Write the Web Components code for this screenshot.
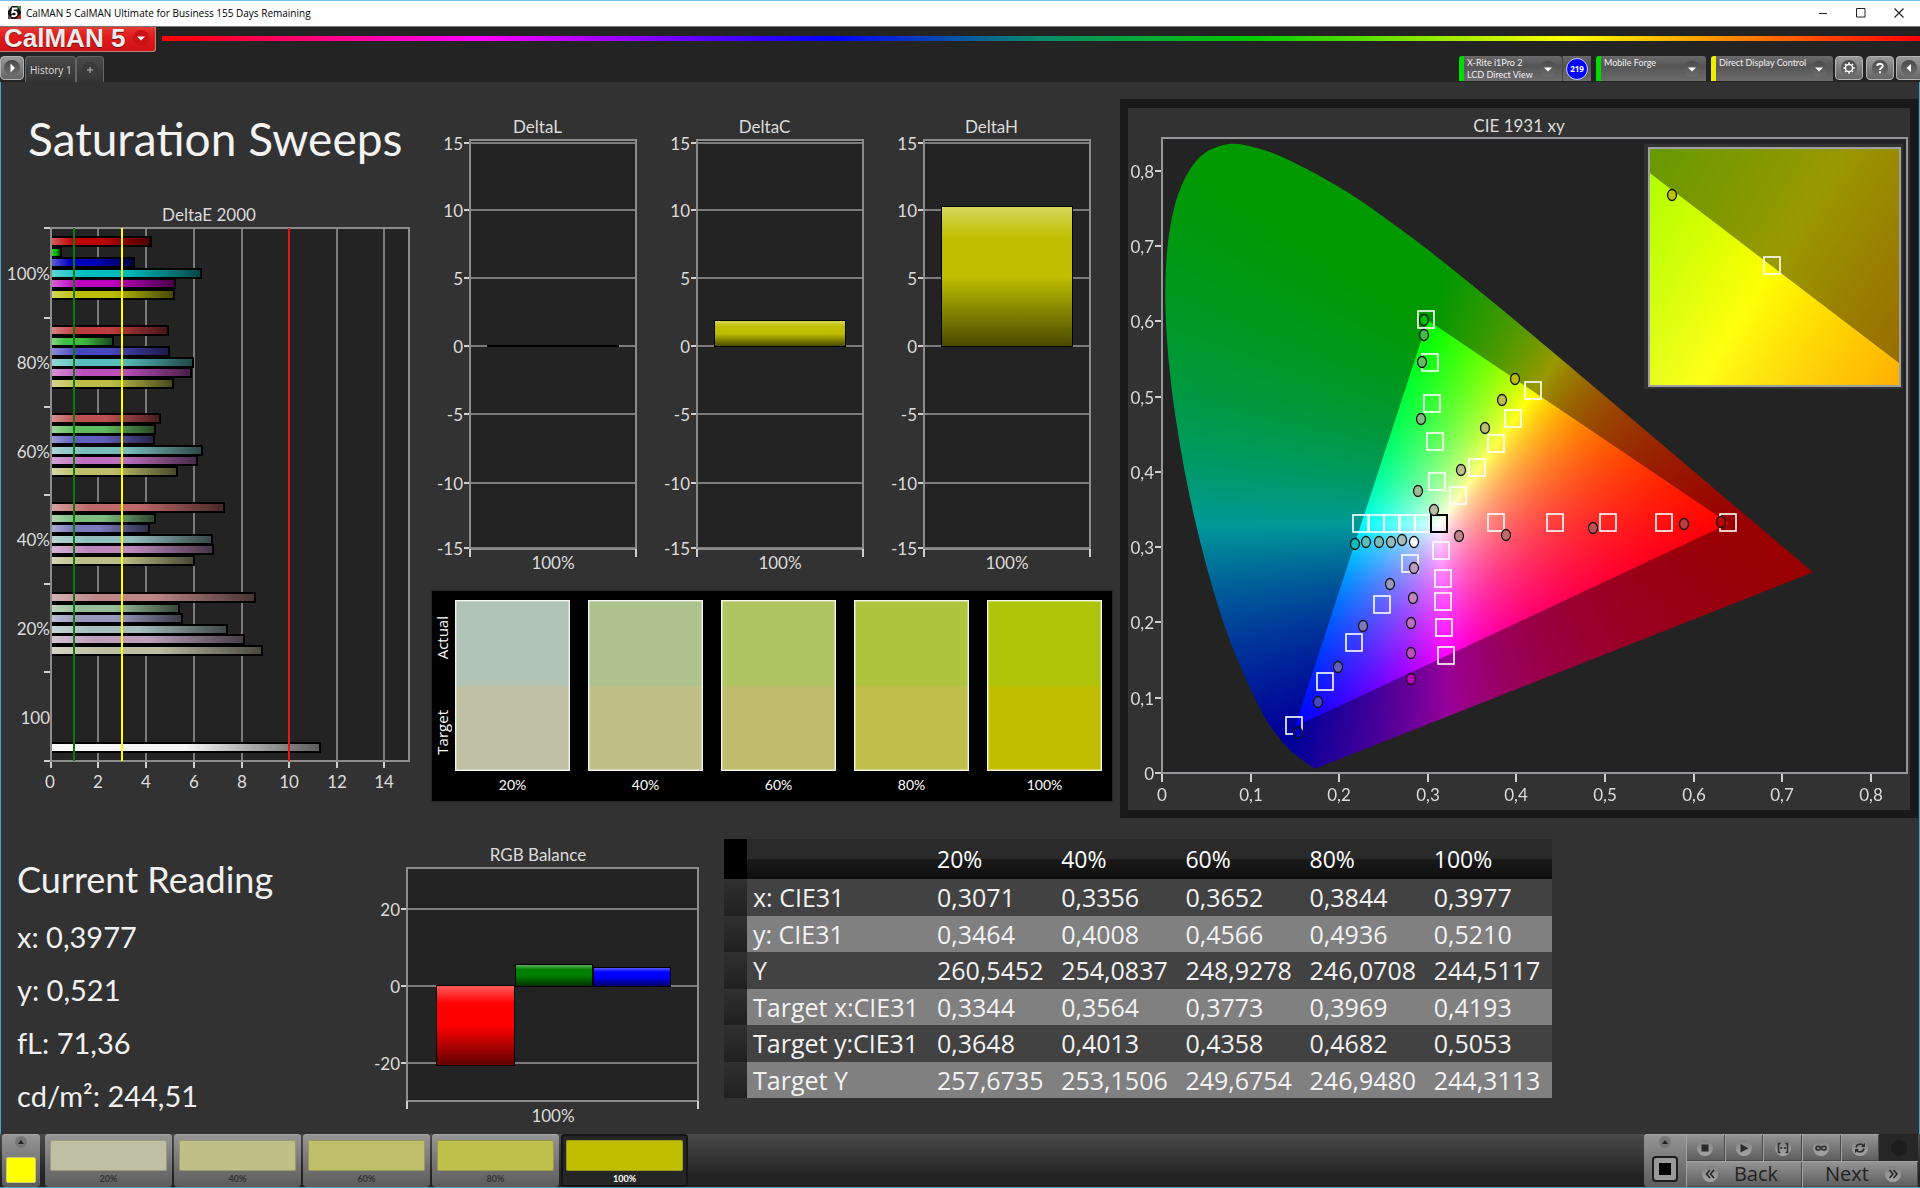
<!DOCTYPE html>
<html lang="en">
<head>
<meta charset="utf-8">
<title>CalMAN 5</title>
<style>
html, body { margin: 0; background: #323232; }
body { font-family: Lato, "Open Sans", sans-serif; color: #dcdcdc; }
</style>
</head>
<body>
<calman-app></calman-app>
<script>
const define = (name, css, html, init) => {
  customElements.define(name, class extends HTMLElement {
    connectedCallback() {
      if (this.shadowRoot) return;
      const root = this.attachShadow({ mode: 'open' });
      root.innerHTML = `<style>*{box-sizing:border-box}${css}</style>` + (typeof html === 'function' ? html(this) : html);
      if (init) init(this, root);
    }
  });
};

const line = (x1, y1, x2, y2, c = '#7c7c7c', w = 2) =>
  `<path d="M${x1} ${y1}L${x2} ${y2}" stroke="${c}" stroke-width="${w}" fill="none" shape-rendering="crispEdges"/>`;
const tick = (x1, y1, x2, y2) => line(x1, y1, x2, y2, '#cfcfcf', 2);
const label = (x, y, t, anchor = 'end') => `<text x="${x}" y="${y}" text-anchor="${anchor}">${t}</text>`;
const mix = (c, d, k) => c.map((v, i) => Math.round(v + (d[i] - v) * k));
const rgb = c => `rgb(${c.join(',')})`;
const shade = (id, c, vertical) => `<linearGradient id="${id}" x2="${vertical ? 0 : 1}" y2="${vertical ? 1 : 0}">
  <stop offset="0" stop-color="${rgb(mix(c, [255, 255, 255], .36))}"/><stop offset=".22" stop-color="${rgb(c)}"/>
  <stop offset=".5" stop-color="${rgb(c)}"/><stop offset="1" stop-color="${rgb(mix(c, [0, 0, 0], .62))}"/></linearGradient>`;

/* Saturation levels run 100, 80, 60, 40, 20 %; LOW holds the value of the reduced channels at each */
const HUES = { red: [1, 0, 0], green: [0, 1, 0], blue: [0, 0, 1], cyan: [0, 1, 1], magenta: [1, 0, 1], yellow: [1, 1, 0] };
const LOW = { red: [0, 60, 82, 105, 134], green: [0, 64, 98, 126, 150], blue: [0, 70, 96, 122, 152],
  cyan: [0, 88, 120, 146, 166], magenta: [0, 80, 110, 136, 158], yellow: [0, 75, 107, 135, 163] };
const tint = (hue, i) => HUES[hue].map(m => m ? 189 : LOW[hue][i]);

const CHART_CSS = `:host{display:block;color:#dcdcdc}
  h2{margin:0;font:400 17px/18px Lato,sans-serif;text-align:center}
  svg{display:block;width:100%;height:auto}
  text{font:400 17px Lato,sans-serif;fill:#dcdcdc}`;

/* Horizontal DeltaE bars */
define('delta-e-chart', CHART_CSS + 'h2{padding-right:13px}', () => {
  const ends = [
    [152, 62, 135, 202, 176, 175], [169, 114, 170, 194, 192, 174], [161, 156, 155, 203, 198, 178],
    [225, 156, 150, 213, 214, 195], [256, 180, 183, 228, 245, 263]];
  const tops = [12, 101, 189, 278, 368];
  let defs = '', bars = '', grid = '', marks = '';
  const bar = (id, c, y, end) => {
    defs += shade(id, c);
    bars += `<rect x="51" y="${y}" width="${end - 51}" height="11" fill="#000"/><rect x="52" y="${y + 2}" width="${end - 54}" height="7" fill="url(#${id})"/>`;
  };
  ends.forEach((row, g) => Object.keys(HUES).forEach((h, i) =>
    bar(`b${g}${i}`, tint(h, g), tops[g] + Math.round(i * 10.5), row[i])));
  bar('white', [245, 245, 245], 518, 321);
  [98, 146, 194, 242, 289, 337, 384].forEach((x, i) => {
    grid += line(x, 4, x, 537) + tick(x, 537, x, 544);
    marks += label(x, 564, 2 * (i + 1), 'middle');
  });
  [4, 94, 183, 271, 360, 448, 537].forEach(y => grid += tick(44, y, 51, y));
  ['100%', '80%', '60%', '40%', '20%', '100'].forEach((t, i) => marks += label(50, 56 + Math.round(i * 88.8), t));
  return `<h2>DeltaE 2000</h2><svg viewBox="0 0 431 580" role="img" aria-label="DeltaE 2000"><defs>${defs}</defs>
    <rect x="51" y="4" width="358" height="533" fill="#232323"/>${grid}${tick(51, 537, 51, 544)}
    ${bars}<path d="M51 4H409V537H51Z" fill="none" stroke="#8c8c8c" stroke-width="2" shape-rendering="crispEdges"/>
    ${line(74, 4, 74, 537, '#0a780a')}${line(122, 4, 122, 537, '#ffff00')}${line(289, 4, 289, 537, '#e01818')}
    ${label(50, 564, 0, 'middle')}${marks}</svg>`;
});

/* Vertical delta bar chart; the title is slotted, the bar value is an attribute */
define('delta-chart', CHART_CSS + 'h2{padding-right:24px}', el => {
  const zero = 210, v = +el.getAttribute('value'), top = Math.round(zero - v * 13.55);
  let g = '';
  [[15, 7], [10, 74], [5, 142], [0, 210], [-5, 278], [-10, 347], [-15, 412]].forEach(([t, y]) =>
    g += line(34, y, 200, y) + tick(28, y, 34, y) + label(27, y + 7, t));
  const bar = v > .1
    ? `<rect x="51" y="${top}" width="132" height="${zero - top + 1}" fill="#000"/><rect x="52" y="${top + 1}" width="130" height="${zero - top - 1}" fill="url(#y)"/>`
    : `<rect x="51" y="209" width="132" height="2" fill="#000"/>`;
  return `<h2><slot></slot></h2><svg viewBox="0 0 227 439" role="img"><defs>${shade('y', [191, 191, 0], 1)}</defs>
    <rect x="34" y="4" width="166" height="409" fill="#232323"/>${g}
    <path d="M34 4H200V413H34Z" fill="none" stroke="#8c8c8c" stroke-width="2" shape-rendering="crispEdges"/>
    ${tick(34, 413, 34, 421)}${tick(200, 413, 200, 421)}${bar}${label(117, 433, '100%', 'middle')}</svg>`;
});

/* RGB balance */
define('rgb-balance', CHART_CSS + 'h2{padding-right:7px}', () => {
  let g = '';
  [[20, 45], [0, 122], [-20, 199]].forEach(([t, y]) => g += line(42, y, 333, y) + tick(36, y, 42, y) + label(35, y + 7, t));
  const bar = (id, x, y, w, h) => `<rect x="${x}" y="${y}" width="${w}" height="${h}" fill="#000"/><rect x="${x + 1}" y="${y + 1}" width="${w - 2}" height="${h - 2}" fill="url(#${id})"/>`;
  return `<h2>RGB Balance</h2><svg viewBox="0 0 353 260" role="img" aria-label="RGB Balance">
    <defs>${shade('r', [255, 0, 0], 1)}${shade('g', [0, 128, 0], 1)}${shade('b', [0, 0, 255], 1)}</defs>
    <rect x="42" y="4" width="291" height="233" fill="#232323"/>${g}
    <path d="M42 4H333V237H42Z" fill="none" stroke="#8c8c8c" stroke-width="2" shape-rendering="crispEdges"/>
    ${tick(42, 237, 42, 245)}${tick(333, 237, 333, 245)}
    ${bar('r', 71, 121, 79, 81)}${bar('g', 150, 100, 78, 23)}${bar('b', 228, 103, 78, 20)}${label(188, 258, '100%', 'middle')}</svg>`;
});

/* Actual / target swatches */
define('color-swatches', `:host{display:flex;background:#000;padding:9px 10px 2px 0;outline:1px solid #282828}
  .side{width:23px;height:171px;padding:16px 0;display:flex;flex-direction:column;justify-content:space-between;font:400 15px/20px "Open Sans",sans-serif;color:#fff}
  .side span{writing-mode:vertical-rl;transform:rotate(180deg)}
  ul{flex:1;display:flex;gap:18px;margin:0;padding:0;list-style:none}
  li{flex:1;font-size:14px;line-height:28px;color:#fff;text-align:center}
  i{display:block;height:171px;border:1px solid #f4f4ee;box-shadow:inset 0 0 0 1px rgba(255,255,255,.35)}`,
  () => {
    const s = [['20%', '#b0c3b6', '#bfbfa3'], ['40%', '#aec28e', '#c0bf87'], ['60%', '#afc463', '#bfbd6b'], ['80%', '#aec43e', '#bfbe4b'], ['100%', '#aec408', '#bfbf00']];
    return `<div class="side"><span>Actual</span><span>Target</span></div><ul>${s.map(([t, a, b]) => `<li><i style="background:linear-gradient(${a} 50%,${b} 50%)"></i>${t}</li>`).join('')}</ul>`;
  });

/* CIE 1931 chromaticity diagram */
const LOCUS = [[.1741, .005], [.1714, .0051], [.1689, .0069], [.1644, .0109], [.1566, .0177], [.144, .0297], [.1241, .0578], [.1096, .0868], [.0913, .1327],
  [.0687, .2007], [.0454, .295], [.0235, .4127], [.0082, .5384], [.0039, .6548], [.0139, .7502], [.0389, .812], [.0743, .8338], [.1142, .8262], [.1547, .8059],
  [.1929, .7816], [.2296, .7543], [.3016, .6923], [.3731, .6245], [.4441, .5547], [.5125, .4866], [.5752, .4242], [.627, .3725], [.6658, .334], [.6915, .3083], [.7347, .2653]];
const GAMUT = [[.64, .33], [.3, .6], [.15, .06]];
const xyColor = (x, y) => {
  y = Math.max(y, .0001);
  const X = x / y, Z = (1 - x - y) / y;
  const c = [3.2406 * X - 1.5372 - .4986 * Z, -.9689 * X + 1.8758 + .0415 * Z, .0557 * X - .204 + 1.057 * Z].map(v => Math.max(v, 0));
  const m = Math.max(...c);
  return c.map(v => 255 * v / m);
};
function paint(ctx, box, toPx, toXY, locus) {
  const [bx, by, bw, bh] = box, layer = k => {
    const cv = document.createElement('canvas'); cv.width = bw; cv.height = bh;
    const c = cv.getContext('2d'), im = c.createImageData(bw, bh);
    for (let j = 0, p = 0; j < bh; j++) for (let i = 0; i < bw; i++) {
      const v = xyColor(...toXY(bx + i, by + j));
      im.data[p++] = v[0] * k; im.data[p++] = v[1] * k; im.data[p++] = v[2] * k; im.data[p++] = 255;
    }
    c.putImageData(im, 0, 0);
    return cv;
  };
  ctx.save();
  ctx.beginPath(); ctx.rect(bx, by, bw, bh); ctx.clip();
  if (locus) {
    const P = LOCUS.map(q => toPx(...q)), at = i => P[Math.max(0, Math.min(P.length - 1, i))];
    ctx.beginPath(); ctx.moveTo(...P[0]);
    for (let i = 0; i < P.length - 1; i++) {
      const [a, b, c, d] = [at(i - 1), at(i), at(i + 1), at(i + 2)];
      ctx.bezierCurveTo(b[0] + (c[0] - a[0]) / 6, b[1] + (c[1] - a[1]) / 6, c[0] - (d[0] - b[0]) / 6, c[1] - (d[1] - b[1]) / 6, c[0], c[1]);
    }
    ctx.closePath(); ctx.clip();
  }
  ctx.drawImage(layer(.6), bx, by);
  ctx.beginPath(); GAMUT.forEach((q, i) => ctx[i ? 'lineTo' : 'moveTo'](...toPx(...q))); ctx.closePath(); ctx.clip();
  ctx.drawImage(layer(1), bx, by);
  ctx.restore();
}
define('cie-diagram', CHART_CSS + `:host{background:#323232;border:8px solid #191919;border-top-width:9px;padding-top:9px}
  h2{padding:0}
  .plot{display:grid}.plot>*{grid-area:1/1;width:100%;height:auto;display:block}`, () => {
  let g = '';
  [0, .1, .2, .3, .4, .5, .6, .7, .8].forEach((v, i) => {
    const t = i ? '0,' + i : '0', x = Math.round(34 + 886 * v), y = Math.round(638 - 753 * v);
    g += tick(x, 638, x, 647) + label(x, 666, t, 'middle') + tick(27, y, 33, y) + label(26, y + 7, t);
  });
  const sq = (x, y, c = '#fff') => `<rect x="${x - 1128 - 8}" y="${y - 135 - 9}" width="16" height="17" fill="none" stroke="${c}" stroke-width="${c === '#fff' ? 1.6 : 2}"/>`;
  const targets = [[1361, 524], [1376, 524], [1392, 524], [1407, 524], [1423, 524], [1496, 523], [1555, 523], [1608, 523], [1664, 523], [1728, 523],
    [1437, 482], [1435, 442], [1432, 404], [1430, 363], [1426, 320], [1458, 496], [1477, 468], [1496, 444], [1513, 419], [1533, 391],
    [1410, 564], [1382, 605], [1354, 643], [1325, 682], [1294, 726], [1441, 551], [1443, 579], [1443, 602], [1444, 628], [1446, 656], [1772, 266]];
  const actual = {
    cyan: [[1355, 544], [1366, 542], [1379, 542], [1391, 542], [1402, 540]],
    red: [[1721, 522], [1684, 524], [1593, 528], [1506, 535], [1459, 536]],
    green: [[1424, 320], [1424, 335], [1422, 362], [1421, 419], [1418, 491]],
    yellow: [[1515, 379], [1502, 400], [1485, 428], [1461, 470], [1434, 510]],
    blue: [[1298, 733], [1318, 702], [1338, 667], [1363, 626], [1390, 584]],
    magenta: [[1411, 679], [1411, 653], [1411, 623], [1413, 598], [1414, 568]]
  };
  const dot = (x, y, c) => `<ellipse cx="${x - 1128}" cy="${y - 135}" rx="4.500" ry="5.500" fill="${c}" stroke="#141414" stroke-width="1.300"/>`;
  let m = targets.map(t => sq(...t)).join('') + sq(1439, 524, '#000');
  for (const h in actual) actual[h].forEach(([x, y], i) => m += dot(x, y, rgb(tint(h, i))));
  m += dot(1414, 542, '#fff') + dot(1672, 195, '#bfbf00');
  return `<h2>CIE 1931 xy</h2><div class="plot"><canvas width="782" height="675"></canvas>
    <svg viewBox="0 0 782 675" role="img" aria-label="CIE 1931 xy">${g}
    <path d="M34 3V638H779V3Z" fill="none" stroke="#96969a" stroke-width="2" shape-rendering="crispEdges"/>
    <path d="M518 11V252H773V11Z" fill="none" stroke="#323232" stroke-width="4"/>
    <path d="M521 13V251H772V13Z" fill="none" stroke="#a0a0a0" stroke-width="2" shape-rendering="crispEdges"/>${m}</svg></div>`;
}, (el, root) => {
  const ctx = root.querySelector('canvas').getContext('2d');
  ctx.fillStyle = '#232323'; ctx.fillRect(34, 3, 745, 635);
  paint(ctx, [34, 3, 745, 635], (x, y) => [34 + 886 * x, 637 - 753 * y], (px, py) => [(px - 34) / 886, (637 - py) / 753], true);
  paint(ctx, [522, 14, 249, 236], (x, y) => [644 + 4644 * (x - .4193), 131 - 4459 * (y - .5053)],
    (px, py) => [.4193 + (px - 644) / 4644, .5053 - (py - 131) / 4459], false);
});

/* Readings */
define('current-reading', `:host{display:block;color:#f0f0f0}
  h2{margin:0 0 10px;font:400 36px/42px Lato,sans-serif}p{margin:0;font-size:29px;line-height:53px}`,
  `<h2>Current Reading</h2><p>x: 0,3977</p><p>y: 0,521</p><p>fL: 71,36</p><p>cd/m²: 244,51</p>`);

define('reading-table', `:host{display:block}
  table{border-collapse:collapse;table-layout:fixed;width:100%;height:259px;color:#f2f2f2;font:400 25px/30px "Open Sans",sans-serif}
  th,td{font-weight:400;text-align:left;padding:0 0 0 6px;white-space:nowrap}
  thead tr{height:40px;background:linear-gradient(#2a2a2a 0 49%,#1a1a1a 51%,#0e0e0e)}
  thead th{font-size:23px;color:#fff}
  .grip{width:23px;padding:0}
  thead .grip{background:#000}
  tbody .grip{background:linear-gradient(#303030,#202020)}
  .name{width:184px}
  tbody tr{background:#424242}tbody tr:nth-child(even){background:#808080}`, () => {
  const rows = [['x: CIE31', '0,3071', '0,3356', '0,3652', '0,3844', '0,3977'], ['y: CIE31', '0,3464', '0,4008', '0,4566', '0,4936', '0,5210'],
    ['Y', '260,5452', '254,0837', '248,9278', '246,0708', '244,5117'], ['Target x:CIE31', '0,3344', '0,3564', '0,3773', '0,3969', '0,4193'],
    ['Target y:CIE31', '0,3648', '0,4013', '0,4358', '0,4682', '0,5053'], ['Target Y', '257,6735', '253,1506', '249,6754', '246,9480', '244,3113']];
  return `<table><thead><tr><td class="grip"></td><td class="name"></td>${['20%', '40%', '60%', '80%', '100%'].map(t => `<th scope="col">${t}</th>`).join('')}</tr></thead>
    <tbody>${rows.map(([n, ...v]) => `<tr><td class="grip"></td><th scope="row">${n}</th>${v.map(t => `<td>${t}</td>`).join('')}</tr>`).join('')}</tbody></table>`;
});

/* Window frame */
define('window-bar', `:host{display:flex;align-items:flex-start;height:26px;background:#fff;border-top:1px solid #76bdea;padding:0 2px 0 8px;color:#000;font:400 10px/24px "Open Sans",sans-serif}
  svg{display:block}.app{margin:5px 5px 0 0}span{flex:1}
  button{width:38px;height:24px;border:0;background:none;padding:0;display:grid;place-items:center}`,
  `<svg class="app" width="13" height="13" viewBox="0 0 13 13"><rect width="13" height="13" fill="#111"/><path d="M0 0H4L0 5Z" fill="#cfd8c0"/><path d="M9 0H13V6Z" fill="#3c8a3c"/><path d="M13 7V13H8Z" fill="#b8231c"/><path d="M0 8V13H4Z" fill="#7a4a5a"/><path d="M9.500 2.500H5L4.300 6.300C6 5.300 8.800 5.800 8.600 8C8.400 10.400 5.500 10.700 3.500 9.700" fill="none" stroke="#fff" stroke-width="1.900"/></svg>
  <span>CalMAN 5 CalMAN Ultimate for Business 155 Days Remaining</span>
  <button aria-label="Minimize"><svg width="10" height="10"><path d="M1 5.500H9" stroke="#222"/></svg></button>
  <button aria-label="Maximize"><svg width="10" height="10"><path d="M.5.500H9V9H.5Z" fill="none" stroke="#222"/></svg></button>
  <button aria-label="Close"><svg width="10" height="10"><path d="M.5.500L9.500 9.500M9.500.500L.5 9.500" stroke="#222" stroke-width="1.200"/></svg></button>`);

/* Round recessed glyph holder */
define('round-glyph', `:host{display:grid;place-items:center;width:var(--d,16px);height:var(--d,16px);border-radius:50%;background:var(--bg,linear-gradient(#4a4a4a,#6e6e6e))}
  svg{display:block;overflow:visible}`, el => {
  const k = el.getAttribute('kind'), f = el.getAttribute('ink') || '#fff', s = `fill="none" stroke="${f}" stroke-width="1.500"`;
  const shapes = {
    down: `<path d="M2 4.500H10L6 8.500Z" fill="${f}"/>`, up: `<path d="M3 8H9L6 4Z" fill="${f}"/>`,
    right: `<path d="M4.500 1.500V10.500L9 6Z" fill="${f}"/>`, left: `<path d="M8 2V10L3.500 6Z" fill="${f}"/>`,
    plus: `<path d="M6 3V9M3 6H9" ${s}/>`, stop: `<path d="M2.500 2.500H9.500V9.500H2.500Z" fill="${f}"/>`,
    play: `<path d="M2.500 2V10.500L10.500 6.200Z" fill="${f}"/>`,
    step: `<path d="M3.500 1.500H1.500V10.500H3.500M8.500 1.500H10.500V10.500H8.500M3 6H5.200M6.800 6H9" ${s}/>`,
    loop: `<path d="M6 6C4.500 3.500 1 3.500 1 6S4.500 8.500 6 6S11 3.500 11 6S7.500 8.500 6 6Z" ${s}/>`,
    sync: `<path d="M2 5.500A4.200 4.200 0 0 1 9.500 3.800M10 6.500A4.200 4.200 0 0 1 2.500 8.200" ${s}/><path d="M11 1V5H7ZM1 11V7H5Z" fill="${f}"/>`,
    back: `<path d="M6 2L2.500 6L6 10M10 2L6.500 6L10 10" ${s}/>`, next: `<path d="M2.500 2L6 6L2.500 10M6.500 2L10 6L6.500 10" ${s}/>`,
    gear: `<circle cx="6" cy="6" r="3.600" ${s}/><path d="M6 .300V2M6 10V11.700M.3 6H2M10 6H11.700M2 2L3.200 3.200M8.800 8.800L10 10M10 2L8.800 3.200M3.200 8.800L2 10" ${s}/>`,
    help: `<path d="M3.300 4C3.300 1 8.700 1 8.700 3.900C8.700 5.800 6 5.700 6 8" fill="none" stroke="${f}" stroke-width="2"/><path d="M5 9.300H7V11.300H5Z" fill="${f}"/>`
  };
  return `<svg width="12" height="12" viewBox="0 0 12 12">${shapes[k] || ''}</svg>`;
});

define('device-menu', `:host{display:flex;height:25px}
  button{flex:1;display:flex;justify-content:space-between;align-items:center;border:0;border-left:5px solid var(--state);border-radius:3px 3px 0 0;background:linear-gradient(#6a6a6a,#555 40%,#6c6c6c);padding:0 6px 0 3px;color:#f0f0f0;font:400 9px/12px Lato,sans-serif;text-align:left}
  span{align-self:flex-start;white-space:pre;padding-top:1px}`,
  el => `<button><span>${el.getAttribute('label').replace('|', '\n')}</span><round-glyph kind="down"></round-glyph></button><slot></slot>`);

define('app-header', `:host{display:block;background:#232323;height:56px;border-top:1px solid #777}
  .top{display:flex;align-items:flex-start;height:29px}
  .logo{width:156px;height:25px;border:0;border-radius:0 0 3px 0;background:linear-gradient(#e63a36,#e01b1b 40%,#cf1212);box-shadow:inset -1px -1px #b98080;display:flex;align-items:center;padding:0 7px 3px 4px;justify-content:space-between;color:#ececec;font:700 26px/22px "Liberation Sans",sans-serif;white-space:nowrap;text-shadow:0 1px 1px #701010}
  .rainbow{flex:1;height:5px;margin:9px 0 0 6px;background:linear-gradient(90deg,#f00,#f0f 18%,#00f 38%,#0a8a6a 50%,#0c0 62%,#ff0 80%,#f00)}
  .row{display:flex;align-items:flex-start;height:26px}
  .box{height:24px;width:28px;border:1px solid #b4b4b4;border-radius:4px;background:linear-gradient(#9a9a9a,#666);padding:0;display:grid;place-items:center}
  .tab{height:26px;border:1px solid #666;border-width:1px 1px 0;border-radius:4px 4px 0 0;background:linear-gradient(#4a4a4a,#333);color:#dedede;font:400 10px/14px "Open Sans",sans-serif;padding:0 4px;display:grid;place-items:center;white-space:nowrap}
  .space{flex:1}
  device-menu{margin-right:5px}
  .badge{display:grid;place-items:center;width:29px;background:linear-gradient(#6a6a6a,#555 40%,#6c6c6c);border-left:1px solid #444}
  .badge i{width:22px;height:22px;border-radius:50%;background:#00f;border:1px solid #cfcfff;color:#fff;font:700 8px/20px "Open Sans",sans-serif;text-align:center}`,
  `<div class="top"><button class="logo">CalMAN 5<round-glyph kind="down" style="--bg:#c81414"></round-glyph></button><div class="rainbow"></div></div>
  <div class="row"><button class="box" style="width:24px" aria-label="Show panel"><round-glyph kind="right"></round-glyph></button>
  <button class="tab" style="width:51px;margin-left:1px">History 1</button><button class="tab" style="width:28px" aria-label="New tab"><round-glyph kind="plus" ink="#999" style="--bg:#3a3a3a"></round-glyph></button>
  <span class="space"></span>
  <device-menu label="X-Rite i1Pro 2|LCD Direct View" style="--state:#0d0;width:132px"><div class="badge"><i>219</i></div></device-menu>
  <device-menu label="Mobile Forge" style="--state:#0d0;width:110px"></device-menu>
  <device-menu label="Direct Display Control" style="--state:#ee0;width:122px;margin-right:2px"></device-menu>
  <button class="box" aria-label="Settings"><round-glyph kind="gear"></round-glyph></button>
  <button class="box" style="margin:0 2px 0 3px" aria-label="Help"><round-glyph kind="help"></round-glyph></button>
  <button class="box" style="width:24px;border-right:0;border-radius:4px 0 0 4px" aria-label="Collapse"><round-glyph kind="left"></round-glyph></button></div>`);

/* Bottom bar */
define('pattern-bar', `:host{display:flex;height:54px;background:linear-gradient(#4a4a4a,#222 80%);border-bottom:1px solid #4c9fd0;padding:0 2px}
  button{border:0;padding:0;margin:0;background:linear-gradient(#969696,#5c5c5c);box-shadow:inset 0 1px #a6a6a6;color:#333}
  .pick{width:38px;border-radius:4px;margin-right:5px;display:flex;flex-direction:column;align-items:center;justify-content:space-between;padding:2px 0 4px}
  .pick i{width:30px;height:26px;border-radius:2px;background:#ff0;border:1px solid #c8c87a}
  .sw{width:127px;margin-right:2px;border-radius:4px;padding:5px 5px 0;font:700 9px/16px Lato,sans-serif;display:block}
  .sw i{display:block;height:31px;border-radius:2px;box-shadow:inset 0 0 0 1px rgba(90,90,60,.35)}
  .on{background:#252525;box-shadow:inset 0 0 0 2px #151515;color:#fff}
  .space{flex:1}
  .stop{width:42px;display:grid;grid-template-rows:16px 1fr;border-radius:4px 0 0 4px;place-items:center}
  .stop i{width:26px;height:26px;border:2px solid #1c1c1c;border-radius:4px;display:grid;place-items:center;background:#999}
  .stop i::after{content:"";width:12px;height:12px;background:#000}
  .keys{width:232px;display:grid;grid-template-columns:repeat(6,1fr);grid-template-rows:27px 26px}
  .keys button{display:flex;align-items:center;justify-content:center;box-shadow:inset 1px 1px #a2a2a2,inset -1px -1px #4a4a4a}
  .keys .off{background:#262626;box-shadow:none}
  .keys .wide{grid-column:span 3;gap:16px;font:400 20px/24px "Open Sans",sans-serif;color:#222}
  .keys .b{padding-right:8px}.keys .n{padding-left:6px}
  round-glyph{--bg:linear-gradient(#808080,#a6a6a6)}`, () => {
  const key = (k, n) => `<button aria-label="${n}"><round-glyph kind="${k}" ink="#2a2a2a"></round-glyph></button>`;
  return `<button class="pick" aria-label="Pick color"><round-glyph kind="up" ink="#222" style="--d:12px;--bg:#777"></round-glyph><i></i></button>
  ${[['20%', '#bfbfa3'], ['40%', '#bfbf87'], ['60%', '#bfbf6b'], ['80%', '#bfbf4b'], ['100%', '#bfbf00']].map(([t, c], i) => `<button class="sw${i === 4 ? ' on' : ''}"><i style="background:${c}"></i>${t}</button>`).join('')}
  <span class="space"></span>
  <button class="stop" aria-label="Stop pattern"><round-glyph kind="up" ink="#222" style="--d:12px;--bg:#777"></round-glyph><i></i></button>
  <div class="keys">${key('stop', 'Stop')}${key('play', 'Play')}${key('step', 'Range')}${key('loop', 'Continuous')}${key('sync', 'Refresh')}<button class="off" aria-label="Record"><round-glyph style="--bg:#1d1d1d"></round-glyph></button>
  <button class="wide b"><round-glyph kind="back" ink="#222"></round-glyph>Back</button><button class="wide n">Next<round-glyph kind="next" ink="#222"></round-glyph></button></div>`;
});

define('calman-app', `:host{display:flex;flex-direction:column;min-height:100vh;background:#323232}
  main{flex:1;box-shadow:inset 1px 0 #4c9fd0,inset -1px 0 #4c9fd0}
  .upper{display:grid;grid-template-columns:431fr 689fr 800fr;align-items:start}
  h1{margin:0;padding:25px 0 0 28px;font:400 46px/64px Lato,sans-serif;color:#f2f2f2;white-space:nowrap}
  delta-e-chart{margin-top:35px}
  .deltas{display:grid;grid-template-columns:repeat(3,1fr);padding:36px 3px 0 5px}
  color-swatches{margin:16px 8px 0 1px}
  cie-diagram{margin:17px 2px 0 0}
  .lower{display:grid;grid-template-columns:348fr 353fr 851fr 368fr;align-items:start;padding-top:20px}
  current-reading{padding:20px 0 0 17px}
  rgb-balance{margin:8px -17px 0 17px}
  reading-table{margin:1px 0 0 23px}`,
  `<window-bar></window-bar><app-header></app-header>
  <main><div class="upper">
    <section><h1>Saturation Sweeps</h1><delta-e-chart></delta-e-chart></section>
    <section><div class="deltas"><delta-chart value="0">DeltaL</delta-chart><delta-chart value="1.9">DeltaC</delta-chart><delta-chart value="10.3">DeltaH</delta-chart></div><color-swatches></color-swatches></section>
    <cie-diagram></cie-diagram>
  </div><div class="lower"><current-reading></current-reading><rgb-balance></rgb-balance><reading-table></reading-table></div></main>
  <pattern-bar></pattern-bar>`);
</script>
</body>
</html>
